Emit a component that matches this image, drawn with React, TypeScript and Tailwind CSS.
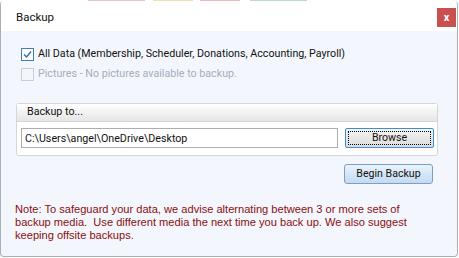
import React, { useState } from 'react';

const CheckIcon = ({ color }: { color: string }) => (
  <svg width="9" height="9" viewBox="0 0 9 9" fill="none">
    <path d="M1 4.5 L3.5 7 L8 1.5" stroke={color} strokeWidth="1.4" />
  </svg>
);

const Checkbox = ({ checked, disabled }: { checked: boolean; disabled?: boolean }) => (
  <span
    className={`flex h-[13px] w-[13px] shrink-0 items-center justify-center border ${
      disabled ? 'border-[#c8ced6] bg-[#f4f6f9]' : 'border-[#3f7fb5] bg-white'
    }`}
  >
    {checked && <CheckIcon color="#2f6da8" />}
  </span>
);

const App: React.FC = () => {
  const [allData, setAllData] = useState(true);
  const [path, setPath] = useState('C:\\Users\\angel\\OneDrive\\Desktop');

  return (
    <div className="h-[258px] w-[459px] bg-white font-['Roboto',sans-serif]">
      {/* bits of the windows behind */}
      <div className="flex h-px opacity-60">
        <div className="w-[88px]" />
        <div className="w-[57px] bg-[#d8a0b0]" />
        <div className="w-[8px]" />
        <div className="w-[40px] bg-[#e0d08a]" />
        <div className="w-[7px]" />
        <div className="w-[40px] bg-[#d89090]" />
        <div className="w-[10px]" />
        <div className="w-[57px] bg-[#8fc0b0]" />
      </div>
      <div className="flex h-[256px] w-[458px] flex-col overflow-hidden rounded-[4px] border border-t-0 border-[#aab0b8] bg-[#f3f7fd]">
        <div className="flex h-[30px] items-start justify-between bg-white pl-[15px] pr-px">
          <span className="mt-[8px] text-[11.5px] text-[#111]">Backup</span>
          <button className="mt-[7px] flex h-[19px] w-[19px] items-center justify-center bg-[#c9504e] text-[11px] font-bold leading-none text-white">
            x
          </button>
        </div>

        <div className="flex flex-col px-[14px] pt-[16px]">
          <label className="flex h-[14px] items-center gap-[4px] pl-[6px] text-[10.7px] text-[#111]" onClick={() => setAllData(!allData)}>
            <Checkbox checked={allData} />
            <span className="whitespace-nowrap">All Data (Membership, Scheduler, Donations, Accounting, Payroll)</span>
          </label>
          <label className="mt-[6px] flex h-[14px] items-center gap-[4px] pl-[6px] text-[10.7px] text-[#a3adbb]">
            <Checkbox checked={false} disabled />
            <span className="whitespace-nowrap">Pictures - No pictures available to backup.</span>
          </label>

          <div className="mt-[22px] ml-px w-[422px] rounded-[3px] border border-[#d3d7dc] bg-white">
            <div className="flex h-[18px] items-center border-b border-[#d3d7dc] bg-gradient-to-b from-white to-[#e6e6e6] pl-[10px] text-[10.7px] text-[#111]">
              Backup to...
            </div>
            <div className="flex items-start gap-[7px] pt-[6px] pb-[7px] pl-[4px]">
              <input
                value={path}
                onChange={e => setPath(e.target.value)}
                className="h-[20px] w-[317px] border border-[#abadb3] bg-white pl-[3px] text-[10.7px] text-[#111] outline-none"
              />
              <button className="flex h-[20px] w-[89px] items-center justify-center rounded-[2px] border border-[#3c8fd0] bg-gradient-to-b from-[#f4f4f4] to-[#dcdcdc] p-[2px]">
                <span className="flex h-full w-full items-center justify-center border border-dotted border-black text-[10.6px] text-[#111]">
                  Browse
                </span>
              </button>
            </div>
          </div>

          <div className="mt-[8px] flex justify-end pr-[10px]">
            <button className="h-[20px] w-[89px] rounded-[3px] border border-[#7c9fc4] bg-gradient-to-b from-[#e9f3fc] to-[#c2daf2] text-[10.6px] text-[#111]">
              Begin Backup
            </button>
          </div>

          <p className="mt-[19px] whitespace-pre font-['Liberation_Sans',Arial,sans-serif] text-[11.1px] leading-[13px] text-[#8b0d0d]">
            {'Note: To safeguard your data, we advise alternating between 3 or more sets of\nbackup media.  Use different media the next time you back up. We also suggest\nkeeping offsite backups.'}
          </p>
        </div>
      </div>
    </div>
  );
};

export default App;
